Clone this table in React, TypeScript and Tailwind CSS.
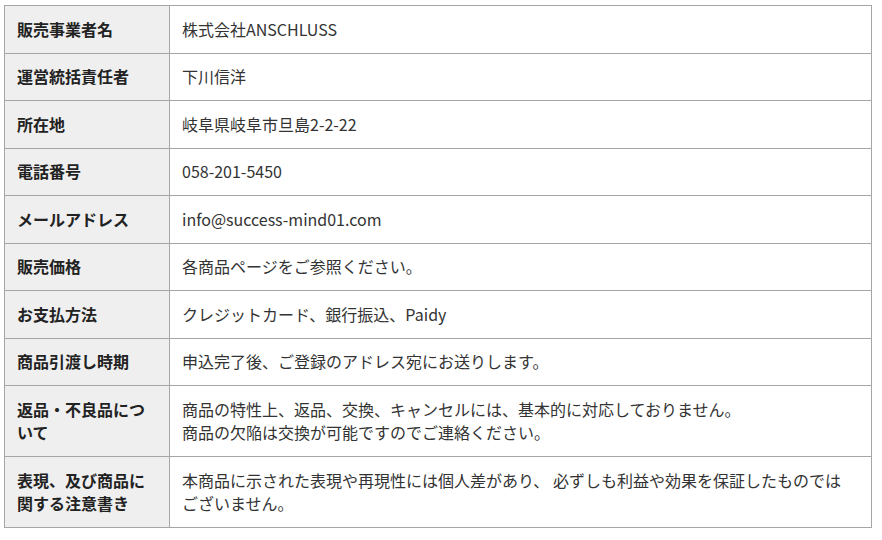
const ROWS: Array<{ label: string; value: React.ReactNode }> = [
  { label: '販売事業者名', value: '株式会社ANSCHLUSS' },
  { label: '運営統括責任者', value: '下川信洋' },
  { label: '所在地', value: '岐阜県岐阜市旦島2-2-22' },
  { label: '電話番号', value: '058-201-5450' },
  { label: 'メールアドレス', value: 'info@success-mind01.com' },
  { label: '販売価格', value: '各商品ページをご参照ください。' },
  { label: 'お支払方法', value: 'クレジットカード、銀行振込、Paidy' },
  { label: '商品引渡し時期', value: '申込完了後、ご登録のアドレス宛にお送りします。' },
  {
    label: '返品・不良品について',
    value: (
      <>
        商品の特性上、返品、交換、キャンセルには、基本的に対応しておりません。
        <br />
        商品の欠陥は交換が可能ですのでご連絡ください。
      </>
    ),
  },
  {
    label: '表現、及び商品に関する注意書き',
    value: (
      <>
        本商品に示された表現や再現性には個人差があり、 必ずしも利益や効果を保証したものでは
        <br />
        ございません。
      </>
    ),
  },
]

export default function App() {
  return (
    <div
      className="min-h-[540px] bg-white pl-[4px] pt-[5px] text-[16px] leading-[23.5px] text-[#333]"
      style={{ fontFamily: '"Noto Sans CJK JP", "Noto Sans", sans-serif' }}
    >
      <table className="w-[868px] table-fixed border-collapse border border-[#a6a6a6]">
        <tbody>
          {ROWS.map((row) => (
            <tr key={row.label}>
              <th className="w-[165px] border border-[#a6a6a6] bg-[#efefef] px-[12px] py-[11.5px] text-left align-middle font-bold text-[#222]">
                {row.label}
              </th>
              <td className="border border-[#a6a6a6] px-[12px] py-[11.5px] align-middle font-normal">
                {row.value}
              </td>
            </tr>
          ))}
        </tbody>
      </table>
    </div>
  )
}
